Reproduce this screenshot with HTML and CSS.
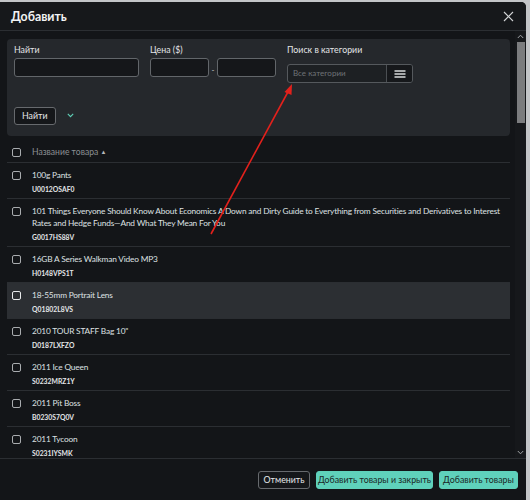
FILE: index.html
```html
<!DOCTYPE html>
<html lang="ru">
<head>
<meta charset="utf-8">
<title>Добавить</title>
<link rel="stylesheet" href="styles.css">
</head>
<body>
<div class="modal">
  <div class="modal-header">
    <h1 class="title">Добавить</h1>
    <button class="close" aria-label="close">
      <svg width="11" height="11" viewBox="0 0 11 11"><path d="M1 1L10 10M10 1L1 10" stroke="#cfd1d3" stroke-width="1.2" fill="none"/></svg>
    </button>
  </div>
  <div class="modal-body">
    <div class="scroll-content">
      <div class="filters">
        <div class="filter-row">
          <div class="field field-search">
            <label class="label">Найти</label>
            <div class="input input-wide"></div>
          </div>
          <div class="field field-price">
            <label class="label">Цена ($)</label>
            <div class="price-range">
              <div class="input input-price"></div>
              <span class="dash">-</span>
              <div class="input input-price"></div>
            </div>
          </div>
          <div class="field field-category">
            <label class="label">Поиск в категории</label>
            <div class="category-picker">
              <span class="placeholder">Все категории</span>
              <span class="menu-btn">
                <svg width="12" height="8" viewBox="0 0 12 8"><path d="M0.5 1H11.5M0.5 4H11.5M0.5 7H11.5" stroke="#d8dadc" stroke-width="1.3" fill="none"/></svg>
              </span>
            </div>
          </div>
        </div>
        <div class="filter-actions">
          <button class="btn btn-dark">Найти</button>
          <svg class="chevron" width="7" height="5" viewBox="0 0 7 5"><path d="M0.8 0.8L3.5 3.6L6.2 0.8" stroke="#5fcfb7" stroke-width="1.1" fill="none"/></svg>
        </div>
      </div>

      <div class="table">
        <div class="table-head">
          <span class="checkbox"></span>
          <span class="head-label">Название товара <span class="sort">▲</span></span>
        </div>
        <div class="row">
          <span class="checkbox"></span>
          <div class="cell"><div class="name">100g Pants</div><div class="code">U0012OSAF0</div></div>
        </div>
        <div class="row">
          <span class="checkbox"></span>
          <div class="cell"><div class="name">101 Things Everyone Should Know About Economics A Down and Dirty Guide to Everything from Securities and Derivatives to Interest Rates and Hedge Funds—And What They Mean For You</div><div class="code">G0017HS88V</div></div>
        </div>
        <div class="row">
          <span class="checkbox"></span>
          <div class="cell"><div class="name">16GB A Series Walkman Video MP3</div><div class="code">H0148VPS1T</div></div>
        </div>
        <div class="row row-hover">
          <span class="checkbox checkbox-bright"></span>
          <div class="cell"><div class="name">18-55mm Portrait Lens</div><div class="code">Q01802L8VS</div></div>
        </div>
        <div class="row">
          <span class="checkbox"></span>
          <div class="cell"><div class="name">2010 TOUR STAFF Bag 10"</div><div class="code">D0187LXFZO</div></div>
        </div>
        <div class="row">
          <span class="checkbox"></span>
          <div class="cell"><div class="name">2011 Ice Queen</div><div class="code">S0232MRZ1Y</div></div>
        </div>
        <div class="row">
          <span class="checkbox"></span>
          <div class="cell"><div class="name">2011 Pit Boss</div><div class="code">B0230S7Q0V</div></div>
        </div>
        <div class="row">
          <span class="checkbox"></span>
          <div class="cell"><div class="name">2011 Tycoon</div><div class="code">S0231IYSMK</div></div>
        </div>
      </div>
    </div>
    <div class="scrollbar">
      <svg class="sb-arrow" width="7" height="5" viewBox="0 0 7 5"><path d="M0.8 4L3.5 1.2L6.2 4" stroke="#a0a3a6" stroke-width="1" fill="none"/></svg>
      <div class="track"><div class="thumb"></div></div>
      <svg class="sb-arrow" width="7" height="5" viewBox="0 0 7 5"><path d="M0.8 1L3.5 3.8L6.2 1" stroke="#a0a3a6" stroke-width="1" fill="none"/></svg>
    </div>
  </div>
  <div class="modal-footer">
    <button class="btn btn-dark btn-cancel">Отменить</button>
    <button class="btn btn-teal btn-add-close">Добавить товары и закрыть</button>
    <button class="btn btn-teal btn-add">Добавить товары</button>
  </div>
</div>
<svg class="annotation" width="530" height="500" viewBox="0 0 530 500">
  <path d="M211 234L289 90" stroke="#e3211c" stroke-width="1.6" fill="none"/>
  <path d="M292 84L284.5 92L291.5 95Z" fill="#e3211c"/>
</svg>
</body>
</html>
```

FILE: styles.css
```css
* { box-sizing: border-box; }

html, body {
  margin: 0;
  padding: 0;
}

body {
  width: 530px;
  height: 500px;
  overflow: hidden;
  background: #c3c5c8;
  font-family: Lato, "Noto Sans", sans-serif;
  color: #d9dbdd;
  position: relative;
}

.modal {
  margin-top: 2px;
  width: 526px;
  height: 498px;
  background: #131518;
  border-top-right-radius: 5px;
  display: flex;
  flex-direction: column;
  overflow: hidden;
}

.modal-header {
  height: 29px;
  flex: none;
  background: #16181b;
  border-bottom: 1px solid #2b2e32;
  display: flex;
  align-items: center;
  justify-content: space-between;
  padding: 1px 12px 0 11px;
}

.title {
  margin: 0;
  font-size: 12.3px;
  font-weight: 700;
  color: #f2f3f4;
}

.close {
  background: none;
  border: 0;
  padding: 0;
  display: flex;
}

.modal-body {
  flex: 1;
  display: flex;
  min-height: 0;
}

.scroll-content {
  flex: 1;
  padding: 8px 5px 0 7px;
  overflow: hidden;
}

.filters {
  background: #25282c;
  border-radius: 4px;
  height: 97px;
  padding: 5px 7px 0;
}

.filter-row {
  display: flex;
  gap: 11px;
}

.field {
  display: flex;
  flex-direction: column;
}

.label {
  font-size: 8.8px;
  line-height: 12px;
  color: #e3e5e7;
  margin-bottom: 2px;
}

.input {
  height: 19px;
  background: #15171a;
  border: 1px solid #62666a;
  border-radius: 3px;
}

.input-wide { width: 125px; }

.price-range {
  display: flex;
  align-items: center;
}

.input-price { width: 59px; }

.dash {
  width: 8px;
  text-align: center;
  font-size: 8px;
  color: #c9cbcd;
  padding-top: 4px;
}

.field-category .category-picker {
  margin-top: 6px;
}

.category-picker {
  width: 126px;
  height: 19px;
  display: flex;
  background: #1d2023;
  border: 1px solid #55595d;
  border-radius: 3px;
  overflow: hidden;
}

.placeholder {
  flex: 1;
  font-size: 8px;
  line-height: 17px;
  padding-left: 5px;
  color: #6f7377;
  border-right: 1px solid #4b4f53;
}

.menu-btn {
  width: 25px;
  background: #16181b;
  display: flex;
  align-items: center;
  justify-content: center;
}

.filter-actions {
  margin-top: 24px;
  display: flex;
  align-items: center;
  gap: 11px;
}

.chevron { margin-top: -2px; }

.btn {
  font-family: inherit;
  font-size: 8.8px;
  height: 18px;
  padding: 0 7px;
  border-radius: 3px;
  cursor: pointer;
  line-height: 16px;
  white-space: nowrap;
}

.btn-dark {
  background: #15171a;
  border: 1px solid #676a6e;
  color: #e6e8ea;
}

.btn-teal {
  background: #5fd1bb;
  border: 1px solid #5fd1bb;
  color: #1b2726;
}

.btn-cancel { width: 52px; padding: 0; }
.btn-add-close { width: 117px; padding: 0; }
.btn-add { width: 79px; padding: 0; }

.table {
  margin-top: 6px;
}

.table-head {
  height: 21px;
  display: flex;
  align-items: center;
  padding-left: 5px;
  border-bottom: 1px solid #2b2e32;
}

.head-label {
  font-size: 8.6px;
  color: #8c8f93;
  margin-left: 11px;
}

.sort {
  font-size: 6px;
  vertical-align: 1px;
  color: #b5b8bb;
}

.checkbox {
  flex: none;
  width: 9px;
  height: 9px;
  border: 1.3px solid #a9acaf;
  border-radius: 2px;
}

.checkbox-bright { border-color: #e8eaec; }

.row {
  display: flex;
  align-items: flex-start;
  padding: 6px 0 4px 5px;
  border-bottom: 1px solid #2b2e32;
}

.row .checkbox {
  margin-top: 1.5px;
}

.row-hover { background: #2c2f33; }

.cell {
  margin-left: 11px;
  flex: 1;
  padding-right: 2px;
}

.name {
  font-size: 8.3px;
  letter-spacing: -0.17px;
  line-height: 12px;
  color: #dfe1e3;
}

.code {
  margin-top: 3px;
  font-size: 6.8px;
  line-height: 10px;
  font-weight: 700;
  color: #e4e6e8;
}

.scrollbar {
  width: 11px;
  flex: none;
  display: flex;
  flex-direction: column;
  align-items: center;
  padding: 3px 0 3px;
  background: #16181b;
}

.sb-arrow { flex: none; }

.track {
  flex: 1;
  width: 100%;
  padding: 3px 0 0 2px;
}

.thumb {
  width: 8px;
  height: 81px;
  background: #7b7c7e;
}

.modal-footer {
  flex: none;
  height: 42px;
  border-top: 1px solid #2b2e32;
  display: flex;
  align-items: center;
  justify-content: flex-end;
  gap: 6px;
  padding: 0 8px 0 0;
  background: #131518;
}

.annotation {
  position: absolute;
  left: 0;
  top: 0;
  pointer-events: none;
}
```
